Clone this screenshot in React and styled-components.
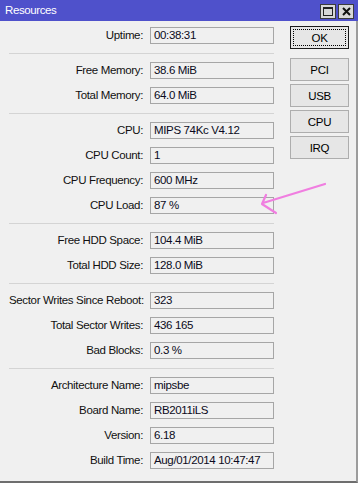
import React from "react";
import styled, { createGlobalStyle } from "styled-components";

const Global = createGlobalStyle`
  html, body { margin: 0; padding: 0; background: #f0f0f0; }
  body { font-family: "Liberation Sans", Arial, sans-serif; }
`;

const Window = styled.div`
  position: relative;
  width: 358px;
  height: 483px;
  display: flex;
  flex-direction: column;
  background: #f0f0f0;
  overflow: hidden;
`;

const TitleBar = styled.div`
  height: 21px;
  flex: none;
  background: #4f51cb;
  display: flex;
  align-items: center;
  padding: 0 4px 0 5px;
`;

const Title = styled.span`
  color: #fff;
  font-size: 11.5px;
  letter-spacing: -0.4px;
  line-height: 21px;
`;

const TitleButtons = styled.div`
  margin-left: auto;
  display: flex;
  gap: 2px;
  margin-top: 1px;
`;

const TitleBtn = styled.div`
  width: 16px;
  height: 15px;
  box-sizing: border-box;
  background: #d8d8d8;
  border: 1px solid #3c3c3c;
  display: flex;
  align-items: center;
  justify-content: center;
`;

const Body = styled.div`
  flex: 1;
  display: flex;
  align-items: flex-start;
  border-right: 2px solid #9c9c9c;
  border-bottom: 2px solid #6e6e6e;
  box-sizing: border-box;
`;

const Form = styled.div`
  margin-top: 6px;
  margin-left: 9px;
  width: 265px;
  display: flex;
  flex-direction: column;
`;

const Group = styled.div`
  display: grid;
  grid-template-columns: 134px 124px;
  column-gap: 7px;
  row-gap: 8px;
`;

const Separator = styled.div`
  height: 1px;
  background: #d4d4d4;
  margin: 9px 0 8px;
`;

const Label = styled.div`
  text-align: right;
  font-size: 11.5px;
  letter-spacing: -0.35px;
  line-height: 17px;
  color: #101010;
  white-space: nowrap;
`;

const Field = styled.div`
  height: 17px;
  box-sizing: border-box;
  border: 1px solid #a6a6a6;
  background: #f0f0f0;
  padding-left: 3px;
  font-size: 11.5px;
  letter-spacing: -0.35px;
  line-height: 15px;
  color: #0a0a20;
  white-space: nowrap;
`;

const Buttons = styled.div`
  margin-top: 5px;
  margin-left: 16px;
  display: flex;
  flex-direction: column;
  gap: 3px;
`;

const Button = styled.div`
  position: relative;
  width: 59px;
  height: 23px;
  box-sizing: border-box;
  border: 1px solid ${(p) => (p.$default ? "#1a1a1a" : "#adadad")};
  background: #e6e6e6;
  display: flex;
  align-items: center;
  justify-content: center;
  font-size: 11.5px;
  letter-spacing: -0.3px;
  color: #000;
  margin-bottom: ${(p) => (p.$default ? "6px" : "0")};
  &::after {
    content: "";
    display: ${(p) => (p.$default ? "block" : "none")};
    position: absolute;
    inset: 2px;
    border: 1px dotted #000;
  }
`;

const Overlay = styled.svg`
  position: absolute;
  left: 0;
  top: 0;
  pointer-events: none;
`;

const groups = [
  [["Uptime:", "00:38:31"]],
  [
    ["Free Memory:", "38.6 MiB"],
    ["Total Memory:", "64.0 MiB"],
  ],
  [
    ["CPU:", "MIPS 74Kc V4.12"],
    ["CPU Count:", "1"],
    ["CPU Frequency:", "600 MHz"],
    ["CPU Load:", "87 %"],
  ],
  [
    ["Free HDD Space:", "104.4 MiB"],
    ["Total HDD Size:", "128.0 MiB"],
  ],
  [
    ["Sector Writes Since Reboot:", "323"],
    ["Total Sector Writes:", "436 165"],
    ["Bad Blocks:", "0.3 %"],
  ],
  [
    ["Architecture Name:", "mipsbe"],
    ["Board Name:", "RB2011iLS"],
    ["Version:", "6.18"],
    ["Build Time:", "Aug/01/2014 10:47:47"],
  ],
];

export default function App() {
  return (
    <>
      <Global />
      <Window>
        <TitleBar>
          <Title>Resources</Title>
          <TitleButtons>
            <TitleBtn>
              <svg width="10" height="9" viewBox="0 0 10 9">
                <rect x="0.5" y="0.5" width="9" height="8" fill="none" stroke="#222" strokeWidth="1" />
                <rect x="0" y="0" width="10" height="2" fill="#222" />
              </svg>
            </TitleBtn>
            <TitleBtn>
              <svg width="9" height="9" viewBox="0 0 9 9">
                <path d="M1 1 L8 8 M8 1 L1 8" stroke="#111" strokeWidth="2" />
              </svg>
            </TitleBtn>
          </TitleButtons>
        </TitleBar>
        <Body>
          <Form>
            {groups.map((g, gi) => (
              <React.Fragment key={gi}>
                {gi > 0 && <Separator />}
                <Group>
                  {g.map(([l, v]) => (
                    <React.Fragment key={l}>
                      <Label>{l}</Label>
                      <Field>{v}</Field>
                    </React.Fragment>
                  ))}
                </Group>
              </React.Fragment>
            ))}
          </Form>
          <Buttons>
            <Button $default>OK</Button>
            <Button>PCI</Button>
            <Button>USB</Button>
            <Button>CPU</Button>
            <Button>IRQ</Button>
          </Buttons>
        </Body>
        <Overlay width="358" height="483" viewBox="0 0 358 483">
          <path
            d="M325 184 L263 203 M266 195 L262 204 L276 213"
            stroke="#f07ee0"
            strokeWidth="2.2"
            fill="none"
            strokeLinecap="round"
            strokeLinejoin="round"
          />
        </Overlay>
      </Window>
    </>
  );
}
